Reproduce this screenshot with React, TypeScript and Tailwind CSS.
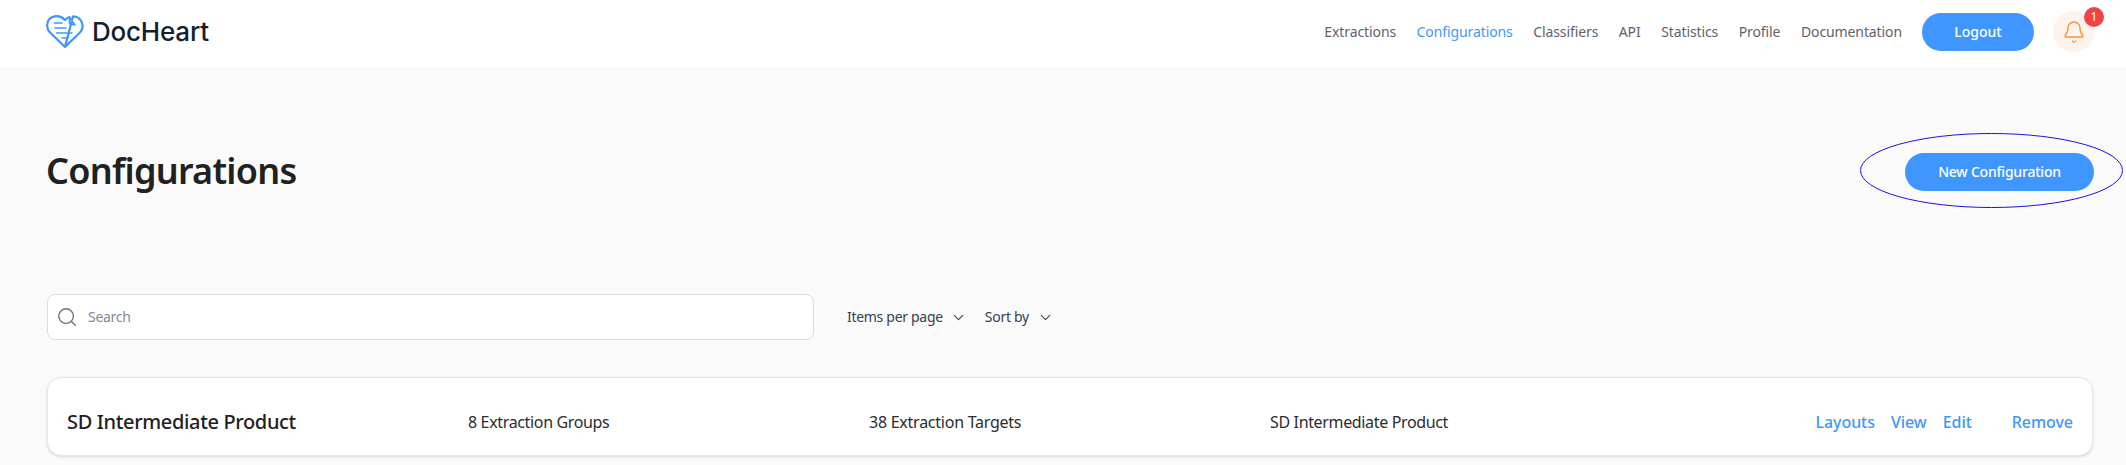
import { Bell, ChevronDown, Search } from 'lucide-react';

const navItems = ['Extractions', 'Configurations', 'Classifiers', 'API', 'Statistics', 'Profile', 'Documentation'];

function Logo() {
  return (
    <svg width="38" height="34" viewBox="0 0 38 34" fill="none" stroke="#4096ff" strokeWidth="2.2" strokeLinecap="round" strokeLinejoin="round">
      <path d="M19 32 L4 17.5 C-0.5 12.5 0.5 5 6 2.3 C10.5 0.2 15.5 1.5 19 5 C20.5 3.5 22 2.5 23.5 2 M27 1.4 C35.5 1.5 39.5 11.5 34 17.5 L19 32 Z" />
      <path d="M23.5 2.5 L23.5 8.7 L29 10 Z" strokeWidth="1.6" />
      <path d="M8.5 8 H16" strokeWidth="1.6" />
      <path d="M9 13 H20" strokeWidth="1.6" />
      <path d="M10.5 18 H26" strokeWidth="1.6" />
      <path d="M16 23 H22" strokeWidth="1.6" />
    </svg>
  );
}

export default function App() {
  return (
    <div className="min-h-[465px] bg-[#fafafa] font-['Noto_Sans',sans-serif] overflow-hidden">
      <header className="h-[67px] bg-white flex items-center justify-between pl-[46px] pr-[32px] pb-[4px]">
        <div className="flex items-center gap-2">
          <Logo />
          <span className="font-['Inter',sans-serif] text-[26px] font-medium tracking-[-0.2px] text-[#141e2e]">DocHeart</span>
        </div>
        <div className="flex items-center">
          <nav className="flex items-center gap-[20.5px] text-sm tracking-[-0.1px] text-[#5f6368]">
            {navItems.map(item => (
              <a key={item} className={item === 'Configurations' ? 'text-[#4096ff]' : ''}>{item}</a>
            ))}
          </nav>
          <button className="ml-5 w-28 h-[38px] rounded-[19px] bg-[#4096ff] text-white text-sm font-medium">Logout</button>
          <div className="relative ml-[19px] w-[41px] h-[41px] rounded-full bg-[#fdf3ea] flex items-center justify-center">
            <Bell size={24} strokeWidth={1.4} className="text-[#f59342]" />
            <span className="absolute -top-1 -right-[10px] w-5 h-5 rounded-full bg-[#ef4444] text-white text-xs flex items-center justify-center">1</span>
          </div>
        </div>
      </header>

      <main className="pl-[46px] pr-[32px]">
        <div className="flex items-center justify-between h-[210px]">
          <h1 className="text-4xl font-semibold text-[#212121] tracking-[-0.75px] mb-[2px]">Configurations</h1>
          <div className="relative">
            <button className="w-[189px] h-[38px] rounded-[19px] bg-[#4096ff] text-white text-sm font-medium tracking-[-0.2px]">New Configuration</button>
            <svg className="absolute -left-[45px] -top-[20px]" width="263" height="75" viewBox="0 0 263 75" fill="none">
              <ellipse cx="131.5" cy="37.5" rx="131" ry="37" stroke="#1a10e0" strokeWidth="1" />
            </svg>
          </div>
        </div>

        <div className="mt-[17px] flex items-center">
          <div className="w-[767px] h-[46px] ml-px bg-white border border-[#dcdde3] rounded-lg flex items-center pl-[8px]">
            <Search size={22} strokeWidth={1.5} className="text-[#6b7280]" />
            <span className="ml-[10px] text-sm tracking-[-0.3px] text-[#85898f]">Search</span>
          </div>
          <div className="ml-[33px] flex items-center text-sm tracking-[-0.3px] text-[#374151]">
            <span>Items per page</span>
            <ChevronDown size={17} strokeWidth={1.5} className="ml-[7px]" />
            <span className="ml-[18px]">Sort by</span>
            <ChevronDown size={17} strokeWidth={1.5} className="ml-[8px]" />
          </div>
        </div>

        <div className="mt-[37px] ml-px h-[79px] w-[2046px] bg-white border border-[#e7e7e7] rounded-[14px] shadow-sm flex items-center pl-[19px] pr-[19px] pt-[10px]">
          <div className="w-[401px] text-xl font-medium tracking-[-0.35px] text-[#1f2024]">SD Intermediate Product</div>
          <div className="w-[401px] text-base tracking-[-0.35px] text-[#2b2c30]">8 Extraction Groups</div>
          <div className="w-[401px] text-base tracking-[-0.25px] text-[#2b2c30]">38 Extraction Targets</div>
          <div className="text-base tracking-[-0.35px] text-[#2b2c30]">SD Intermediate Product</div>
          <div className="ml-auto flex items-center text-base font-medium tracking-[-0.05px] text-[#4096ff]">
            <a>Layouts</a>
            <a className="ml-4">View</a>
            <a className="ml-4">Edit</a>
            <a className="ml-[40px]">Remove</a>
          </div>
        </div>
      </main>
    </div>
  );
}
